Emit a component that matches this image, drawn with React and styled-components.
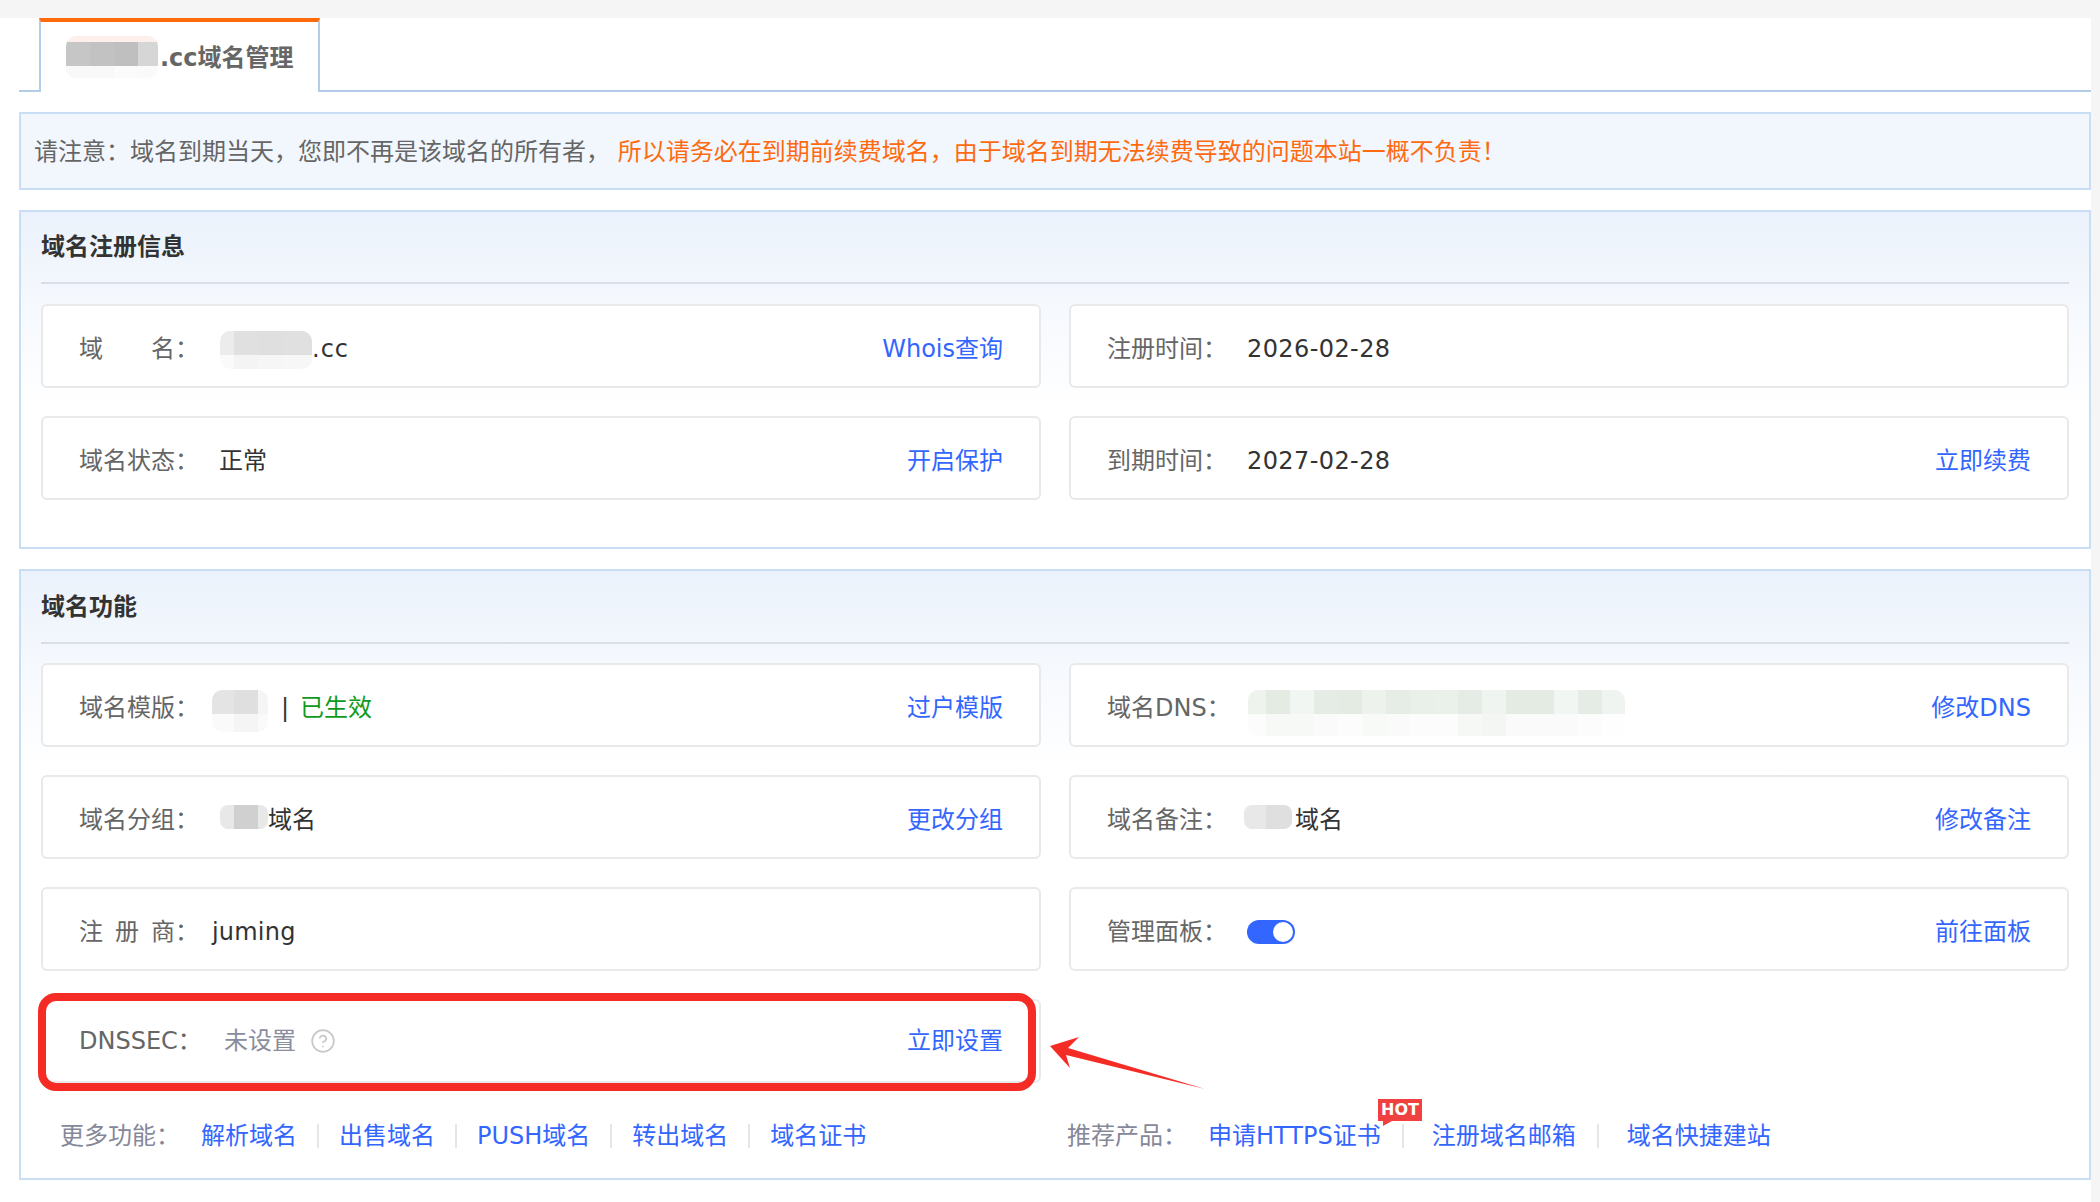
import React from "react";
import styled, { createGlobalStyle } from "styled-components";
import { CircleHelp } from "lucide-react";

const Global = createGlobalStyle`
  html, body { margin: 0; padding: 0; background: #f5f5f5; }
  body { font-family: "DejaVu Sans", "Noto Sans CJK SC", sans-serif; font-size: 24px; line-height: 32px; color: #333; }
  a { text-decoration: none; }
`;

const Page = styled.div`
  width: 2100px;
  height: 1202px;
  overflow: hidden;
  position: relative;
  background: #f5f5f5;
`;
const TopBar = styled.div`
  height: 18px;
`;
const Main = styled.main`
  box-sizing: border-box;
  width: 2091px;
  height: 1184px;
  padding-left: 19px;
  background: #fff;
  display: flex;
  flex-direction: column;
  gap: 20px;
`;
const TabStrip = styled.div`
  height: 72px;
  flex: none;
  border-bottom: 2px solid #b3cce8;
  padding-left: 20px;
  display: flex;
`;
const Tab = styled.div`
  box-sizing: border-box;
  width: 281px;
  height: 74px;
  background: #fff;
  border-top: 4px solid #ff6a0a;
  border-left: 2px solid #b3cce8;
  border-right: 2px solid #b3cce8;
  padding: 2px 0 0 25px;
  display: flex;
  align-items: center;
  font-weight: 700;
  color: #666;
`;
const Notice = styled.div`
  box-sizing: border-box;
  height: 78px;
  flex: none;
  display: flex;
  align-items: center;
  padding: 2px 0 0 13px;
  background: #f2f7fe;
  border: 2px solid #c9ddf5;
  color: #666;
  white-space: pre;
`;
const Warn = styled.span`
  color: #ff6a10;
`;
const Panel = styled.section`
  box-sizing: border-box;
  flex: none;
  height: ${(p) => p.$h}px;
  border: 2px solid #c9ddf5;
  background: linear-gradient(180deg, #ebf2fb 0, #f6f9fe 100px, #fff 200px);
  padding: 0 20px;
`;
const PanelTitle = styled.h2`
  margin: 0;
  height: ${(p) => p.$h}px;
  border-bottom: 2px solid #d9dfe9;
  display: flex;
  align-items: center;
  font-size: 24px;
  font-weight: 700;
  color: #333;
`;
const Grid = styled.div`
  display: grid;
  grid-template-columns: 1000px 1000px;
  column-gap: 28px;
  row-gap: 28px;
  margin-top: ${(p) => p.$mt}px;
`;
const Row = styled.div`
  box-sizing: border-box;
  height: 84px;
  background: #fff;
  border: 2px solid #e9e9e9;
  border-radius: 6px;
  padding: ${(p) => (p.$marked ? 0 : 5)}px 36px 0;
  display: flex;
  align-items: center;
  position: relative;
  &::after {
    content: ${(p) => (p.$marked ? '""' : "none")};
    position: absolute;
    left: -5px;
    right: 3px;
    top: -8px;
    bottom: -10px;
    border: 8px solid #f52c25;
    border-radius: 18px;
    pointer-events: none;
  }
`;
const Label = styled.span`
  flex: none;
  width: ${(p) => p.$w || 140}px;
  color: #666;
  white-space: pre;
`;
const Value = styled.span`
  flex: 1;
  display: flex;
  align-items: center;
  color: ${(p) => (p.$muted ? "#8a8d9c" : "#333")};
  white-space: pre;
`;
const Latin = styled.span`
  letter-spacing: ${(p) => p.$ls}px;
`;
const Ok = styled.span`
  color: #0f9a1c;
`;
const Bar = styled.span`
  margin: 0 11px 0 13px;
`;
const Action = styled.a`
  flex: none;
  color: #3366ff;
`;
const Help = styled(CircleHelp)`
  margin-left: 14px;
  color: #c8c8c8;
`;
const Toggle = styled.span`
  box-sizing: border-box;
  width: 48px;
  height: 24px;
  border-radius: 12px;
  background: #3366ff;
  padding: 2px;
  display: flex;
  justify-content: flex-end;
  &::after {
    content: "";
    width: 20px;
    height: 20px;
    border-radius: 50%;
    background: #fff;
  }
`;
const Mosaic = styled.svg`
  flex: none;
  display: block;
  border-radius: ${(p) => p.$r}px;
  margin-left: ${(p) => p.$ml || 0}px;
  margin-right: ${(p) => p.$mr || 0}px;
  margin-top: ${(p) => p.$mt || 0}px;
`;
const Footer = styled.div`
  display: grid;
  grid-template-columns: 1000px 1000px;
  column-gap: 28px;
  margin-top: 41px;
`;
const LinkGroup = styled.div`
  display: flex;
  align-items: center;
  height: 24px;
  margin-left: ${(p) => p.$ml}px;
`;
const GroupLabel = styled.span`
  width: 141px;
  flex: none;
  color: #85889a;
`;
const FootLink = styled.a`
  position: relative;
  color: #3366ff;
  display: block;
  padding-right: ${(p) => p.$pr ?? 20}px;
  margin-right: ${(p) => p.$mr ?? 20}px;
  border-right: ${(p) => (p.$last ? "none" : "2px solid #e6e6e6")};
  line-height: 24px;
`;
const Hot = styled.span`
  position: absolute;
  left: 170px;
  top: -25px;
  width: 44px;
  height: 22px;
  background: #f04040;
  color: #fff;
  font: 700 16px/22px "DejaVu Sans", sans-serif;
  text-align: center;
  &::after {
    content: "";
    position: absolute;
    left: 5px;
    top: 22px;
    border-top: 5px solid #f04040;
    border-right: 9px solid transparent;
  }
`;
const Arrow = styled.svg`
  position: absolute;
  left: 1040px;
  top: 1030px;
`;

function Blur({ x, y, radius = 10, ml, mr, mt }) {
  // x: column widths, y: [height, colours[]] rows
  const w = x.reduce((a, b) => a + b, 0);
  const h = y.reduce((a, b) => a + b[0], 0);
  let top = 0;
  return (
    <Mosaic width={w} height={h} viewBox={`0 0 ${w} ${h}`} $ml={ml} $mr={mr} $mt={mt} $r={radius}>
      {y.map(([rh, cols], i) => {
        let left = 0;
        const cells = x.map((cw, j) => {
          const r = <rect key={j} x={left} y={top} width={cw} height={rh} fill={cols[j]} />;
          left += cw;
          return r;
        });
        top += rh;
        return <g key={i}>{cells}</g>;
      })}
    </Mosaic>
  );
}

export default function App() {
  return (
    <Page>
      <Global />
      <TopBar />
      <Main>
        <TabStrip>
          <Tab>
            <Blur
              x={[24, 24, 24, 20]}
              y={[
                [6, ["#fdf0ec", "#fdf0ec", "#fdf0ec", "#fdf0ec"]],
                [24, ["#c6c6c6", "#c2c2c2", "#bfbfbf", "#d6d6d6"]],
                [12, ["#f8f8f8", "#f8f8f8", "#fbfbfb", "#fafafa"]],
              ]}
              mt={-2}
              mr={2}
            />
            .cc域名管理
          </Tab>
        </TabStrip>
        <Notice>
          请注意：域名到期当天，您即不再是该域名的所有者， <Warn>所以请务必在到期前续费域名，由于域名到期无法续费导致的问题本站一概不负责！</Warn>
        </Notice>
        <Panel $h={339}>
          <PanelTitle $h={70}>域名注册信息</PanelTitle>
          <Grid $mt={20}>
            <Row>
              <Label>域{"\u3000\u3000"}名：</Label>
              <Value>
                <Blur
                  x={[14, 24, 24, 30]}
                  y={[
                    [24, ["#ececec", "#e0e0e0", "#dfdfdf", "#e0e0e0"]],
                    [14, ["#fafafa", "#f4f4f4", "#f6f6f6", "#f7f7f7"]],
                  ]}
                  mt={2}
                  ml={1}
                />
                <Latin $ls={1}>.cc</Latin>
              </Value>
              <Action>Whois查询</Action>
            </Row>
            <Row>
              <Label>注册时间：</Label>
              <Value><Latin $ls={0.4}>2026-02-28</Latin></Value>
            </Row>
            <Row>
              <Label>域名状态：</Label>
              <Value>正常</Value>
              <Action>开启保护</Action>
            </Row>
            <Row>
              <Label>到期时间：</Label>
              <Value><Latin $ls={0.4}>2027-02-28</Latin></Value>
              <Action>立即续费</Action>
            </Row>
          </Grid>
        </Panel>
        <Panel $h={611}>
          <PanelTitle $h={71}>域名功能</PanelTitle>
          <Grid $mt={19}>
            <Row>
              <Label $w={133}>域名模版：</Label>
              <Value>
                <Blur
                  x={[22, 24, 10]}
                  y={[
                    [24, ["#e4e4e4", "#dfdfdf", "#f5f5f5"]],
                    [18, ["#fafafa", "#f5f5f5", "#fafafa"]],
                  ]}
                  mt={6}
                />
                <Bar>|</Bar>
                <Ok>已生效</Ok>
              </Value>
              <Action>过户模版</Action>
            </Row>
            <Row>
              <Label>域名DNS：</Label>
              <Value>
                <Blur
                  x={[18, 24, 24, 24, 24, 24, 24, 24, 24, 24, 24, 24, 24, 24, 24, 23]}
                  y={[
                    [24, ["#eef3ee", "#e3ebe3", "#f2f6f2", "#e5ece5", "#e3ebe3", "#edf2ed", "#e6ede6", "#e9efe9", "#eaf0ea", "#e5ece5", "#f0f4f0", "#e3ebe3", "#e3ebe3", "#f2f6f2", "#e5ece5", "#f0f4f0"]],
                    [22, ["#fcfcfc", "#f7f9f7", "#f7f9f7", "#f9faf9", "#fbfcfb", "#f8faf8", "#f9faf9", "#fbfcfb", "#fcfcfc", "#f6f8f6", "#f3f6f3", "#f9faf9", "#f9faf9", "#f9faf9", "#fcfcfc", "#fefefe"]],
                  ]}
                  mt={10}
                  ml={1}
                />
              </Value>
              <Action>修改DNS</Action>
            </Row>
            <Row>
              <Label>域名分组：</Label>
              <Value>
                <Blur x={[14, 24, 10]} y={[[24, ["#e8e8e8", "#d0d0d0", "#e8e8e8"]]]} radius={8} mt={-5} ml={1} />
                域名
              </Value>
              <Action>更改分组</Action>
            </Row>
            <Row>
              <Label>域名备注：</Label>
              <Value>
                <Blur x={[22, 26]} y={[[24, ["#e8e8e8", "#dfdfdf"]]]} radius={8} ml={-3} mr={3} mt={-5} />
                域名
              </Value>
              <Action>修改备注</Action>
            </Row>
            <Row>
              <Label $w={133}>注{"\u2002"}册{"\u2002"}商：</Label>
              <Value><Latin $ls={0.2}>juming</Latin></Value>
            </Row>
            <Row>
              <Label>管理面板：</Label>
              <Value><Toggle /></Value>
              <Action>前往面板</Action>
            </Row>
            <Row $marked>
              <Label $w={145}>DNSSEC：</Label>
              <Value $muted>未设置<Help size={26} strokeWidth={1.6} /></Value>
              <Action>立即设置</Action>
            </Row>
          </Grid>
          <Footer>
            <LinkGroup $ml={19}>
              <GroupLabel>更多功能：</GroupLabel>
              <FootLink>解析域名</FootLink>
              <FootLink>出售域名</FootLink>
              <FootLink>PUSH域名</FootLink>
              <FootLink>转出域名</FootLink>
              <FootLink $last>域名证书</FootLink>
            </LinkGroup>
            <LinkGroup $ml={-2}>
              <GroupLabel>推荐产品：</GroupLabel>
              <FootLink $pr={21} $mr={28}>申请HTTPS证书<Hot>HOT</Hot></FootLink>
              <FootLink $pr={21} $mr={28}>注册域名邮箱</FootLink>
              <FootLink $last>域名快捷建站</FootLink>
            </LinkGroup>
          </Footer>
        </Panel>
      </Main>
      <Arrow width="170" height="65" viewBox="1040 1030 170 65">
        <path d="M1050 1046 L1079 1037 L1068 1048 L1205 1089 L1066 1055 L1070 1068 Z" fill="#f52c25" />
      </Arrow>
    </Page>
  );
}
